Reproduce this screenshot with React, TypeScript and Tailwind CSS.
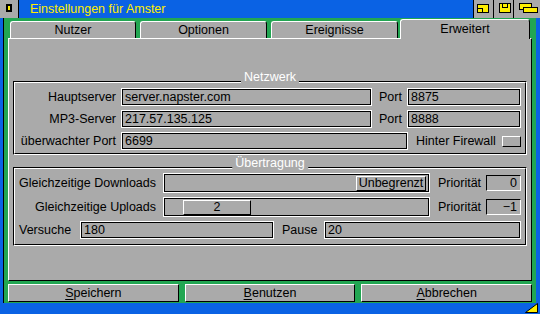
import React from "react";

const Y = "#ffee00";

function Field({
  className = "",
  children,
  right = false,
}: {
  className?: string;
  children?: React.ReactNode;
  right?: boolean;
}) {
  return (
    <div className={`h-[18px] border border-white ${className}`}>
      <div
        className={`h-full border border-black flex items-center px-[2px] ${
          right ? "justify-end" : ""
        }`}
      >
        <span className="leading-none whitespace-nowrap">{children}</span>
      </div>
    </div>
  );
}

function Box({ children }: { children: React.ReactNode }) {
  return (
    <div className="ml-auto w-[35px] h-[16px] border border-t-black border-l-black border-r-white border-b-white flex items-center justify-end pr-[3px]">
      <span className="leading-none">{children}</span>
    </div>
  );
}

function Slider({ knob, children }: { knob: string; children: React.ReactNode }) {
  return (
    <div className="ml-[7px] w-[267px] h-[20px] border border-white">
      <div className="h-full border border-black flex items-center">
        <div
          className={`h-[15px] border border-t-white border-l-white border-r-black border-b-black flex items-center justify-center ${knob}`}
        >
          <span className="leading-none">{children}</span>
        </div>
      </div>
    </div>
  );
}

function Group({
  title,
  className = "",
  inner = "",
  children,
}: {
  title: string;
  className?: string;
  inner?: string;
  children: React.ReactNode;
}) {
  return (
    <div
      className={`relative border border-t-black border-l-black border-r-white border-b-white ${className}`}
    >
      <div
        className={`border border-t-white border-l-white border-r-black border-b-black px-[4px] ${inner}`}
      >
        {children}
      </div>
      <div className="absolute left-1/2 -translate-x-1/2 top-[-11px] px-[3px] bg-[#aaaaaa] text-white leading-[12px] whitespace-nowrap">
        {title}
      </div>
    </div>
  );
}

function Tab({ label, w, ml, active = false }: { label: string; w: string; ml: string; active?: boolean }) {
  if (active) {
    return (
      <div
        className={`${w} ${ml} h-[20px] -mb-px relative z-10 bg-[#aaaaaa] border-t border-l border-r border-t-white border-l-white border-r-black rounded-t-[3px] flex items-center justify-center`}
      >
        <span className="leading-none">{label}</span>
      </div>
    );
  }
  return (
    <div
      className={`${w} ${ml} h-[17px] bg-[#aaaaaa] border-t border-l border-r border-t-white border-l-white border-r-black rounded-t-[3px] flex items-center justify-center`}
    >
      <span className="leading-none">{label}</span>
    </div>
  );
}

function Button({ first, rest }: { first: string; rest: string }) {
  return (
    <div className="flex-1 h-[18px] bg-[#aaaaaa] border border-t-white border-l-white border-r-black border-b-black flex items-center justify-center">
      <span className="leading-none">
        <span className="underline underline-offset-[2px]">{first}</span>
        {rest}
      </span>
    </div>
  );
}

export default function App() {
  return (
    <div className="w-[540px] h-[314px] bg-[#0a62e4] flex flex-col font-['Liberation_Sans',Arial,sans-serif] text-[12.5px] text-black overflow-hidden">
      {/* Title bar */}
      <div className="h-[18px] flex shrink-0">
        <div className="w-[19px] h-full bg-[#aaaaaa] border-r border-black">
          <svg width="18" height="18">
            <rect x="6" y="4" width="6" height="8" fill="#000" />
            <rect x="8" y="6" width="2" height="4" fill={Y} />
          </svg>
        </div>
        <div className="flex-1 pl-[11px] text-[#ffee00] leading-[18px] whitespace-nowrap">
          Einstellungen für Amster
        </div>
        <div className="w-[20px] h-full bg-[#aaaaaa] border-l border-black">
          <svg width="19" height="18">
            <rect x="3.5" y="4.5" width="11" height="8" fill={Y} stroke="#000" />
            <rect x="3.5" y="8.5" width="5" height="4" fill={Y} stroke="#000" />
          </svg>
        </div>
        <div className="w-[20px] h-full bg-[#aaaaaa] border-l border-black">
          <svg width="19" height="18">
            <rect x="5.5" y="3.5" width="11" height="9" fill={Y} stroke="#000" />
            <rect x="8.5" y="3.5" width="5" height="4" fill={Y} stroke="#000" />
          </svg>
        </div>
        <div className="w-[27px] h-full bg-[#aaaaaa] border-l border-black">
          <svg width="26" height="18">
            <rect x="5.5" y="3.5" width="12" height="6" fill={Y} stroke="#000" />
            <rect x="9.5" y="7.5" width="14" height="5" fill={Y} stroke="#000" />
          </svg>
        </div>
      </div>

      {/* Green window body */}
      <div className="ml-[3px] mr-[4px] h-[285px] shrink-0 bg-[#22a652] border-l border-black flex flex-col px-[4px] pt-px pb-px">
        {/* Tabs */}
        <div className="h-[19px] flex items-end shrink-0">
          <Tab label="Nutzer" w="w-[126px]" ml="ml-[2px]" />
          <Tab label="Optionen" w="w-[127px]" ml="ml-[4px]" />
          <Tab label="Ereignisse" w="w-[127px]" ml="ml-[4px]" />
          <Tab label="Erweitert" w="w-[130px]" ml="ml-[2px]" active />
        </div>

        {/* Panel */}
        <div className="flex-1 bg-[#aaaaaa] border border-t-white border-l-white border-r-black border-b-black px-[4px] pt-[42px]">
          <Group title="Netzwerk" inner="pt-[5px] pb-[3px] flex flex-col gap-[4px]">
            <div className="flex items-center h-[18px]">
              <div className="w-[97px] text-right leading-none">Hauptserver</div>
              <Field className="ml-[5px] w-[251px]">server.napster.com</Field>
              <div className="ml-[7px] w-[23px] leading-none">Port</div>
              <Field className="ml-[5px] flex-1">8875</Field>
            </div>
            <div className="flex items-center h-[18px]">
              <div className="w-[97px] text-right leading-none">MP3-Server</div>
              <Field className="ml-[5px] w-[251px]">217.57.135.125</Field>
              <div className="ml-[7px] w-[23px] leading-none">Port</div>
              <Field className="ml-[5px] flex-1">8888</Field>
            </div>
            <div className="flex items-center h-[18px]">
              <div className="w-[97px] text-right leading-none whitespace-nowrap">überwachter Port</div>
              <Field className="ml-[5px] w-[287px]">6699</Field>
              <div className="ml-[8px] leading-none whitespace-nowrap">Hinter Firewall</div>
              <div className="ml-auto w-[19px] h-[11px] border border-t-white border-l-white border-r-black border-b-black" />
            </div>
          </Group>

          <Group title="Übertragung" className="mt-[12px]" inner="pt-[4px] pb-[5px] flex flex-col gap-[4px]">
            <div className="flex items-center h-[20px]">
              <div className="w-[137px] text-right leading-none whitespace-nowrap">Gleichzeitige Downloads</div>
              <Slider knob="w-[70px] ml-auto mr-[2px]">Unbegrenzt</Slider>
              <div className="ml-[8px] leading-none">Priorität</div>
              <Box>0</Box>
            </div>
            <div className="flex items-center h-[20px]">
              <div className="w-[137px] text-right leading-none whitespace-nowrap">Gleichzeitige Uploads</div>
              <Slider knob="w-[68px] ml-[18px]">2</Slider>
              <div className="ml-[8px] leading-none">Priorität</div>
              <Box>−1</Box>
            </div>
            <div className="flex items-center h-[18px]">
              <div className="w-[53px] leading-none">Versuche</div>
              <Field className="ml-[8px] w-[194px]">180</Field>
              <div className="ml-[8px] w-[36px] leading-none">Pause</div>
              <Field className="ml-[6px] flex-1">20</Field>
            </div>
          </Group>
        </div>

        {/* Buttons */}
        <div className="mt-[3px] flex gap-[6px] shrink-0">
          <Button first="S" rest="peichern" />
          <Button first="B" rest="enutzen" />
          <Button first="A" rest="bbrechen" />
        </div>
      </div>

      {/* Bottom border with resize gadget */}
      <div className="flex-1 flex justify-end items-end pr-[2px] pb-px">
        <svg width="13" height="10">
          <polygon points="12.5,0.5 12.5,9.5 0.5,9.5" fill={Y} stroke="#000" />
        </svg>
      </div>
    </div>
  );
}
